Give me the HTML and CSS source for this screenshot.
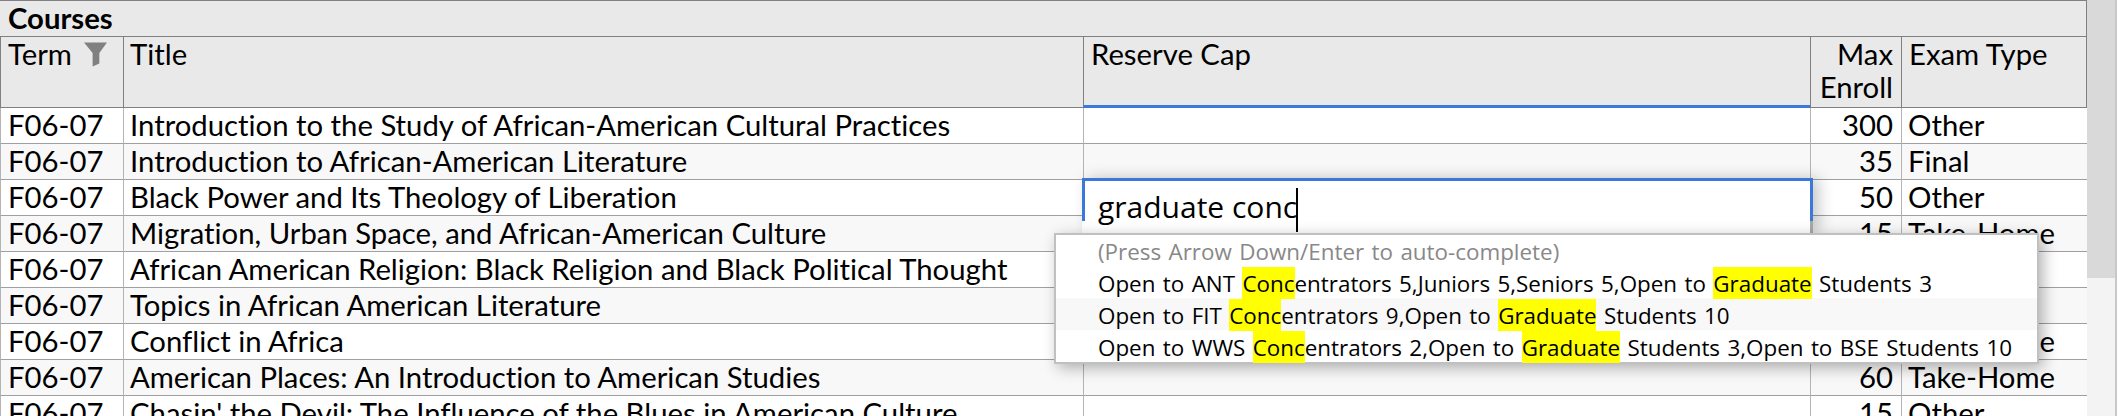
FILE: index.html
```html
<!DOCTYPE html>
<html lang="en">

<head>
    <meta charset="UTF-8">
    <title>Courses</title>
    <link rel="stylesheet" href="styles.css">
</head>

<body>
    <div class="page">
        <div class="sheet">
            <div class="sheet-title">Courses</div>
            <table class="grid">
                <colgroup>
                    <col class="col-term">
                    <col class="col-title">
                    <col class="col-reserve">
                    <col class="col-enroll">
                    <col class="col-exam">
                </colgroup>
                <thead>
                    <tr>
                        <th>Term
                            <svg class="filter-icon" viewBox="0 0 24 25"><path d="M0 0H24L16 11V22L9 25V11Z"/></svg>
                        </th>
                        <th>Title</th>
                        <th class="selected">Reserve Cap</th>
                        <th class="num">Max Enroll</th>
                        <th class="exam">Exam Type</th>
                    </tr>
                </thead>
                <tbody>
                    <tr><td>F06-07</td><td>Introduction to the Study of African-American Cultural Practices</td><td></td><td class="num">300</td><td>Other</td></tr>
                    <tr><td>F06-07</td><td>Introduction to African-American Literature</td><td></td><td class="num">35</td><td>Final</td></tr>
                    <tr><td>F06-07</td><td>Black Power and Its Theology of Liberation</td><td></td><td class="num">50</td><td>Other</td></tr>
                    <tr><td>F06-07</td><td>Migration, Urban Space, and African-American Culture</td><td></td><td class="num">15</td><td>Take-Home</td></tr>
                    <tr><td>F06-07</td><td>African American Religion: Black Religion and Black Political Thought</td><td></td><td class="num"></td><td></td></tr>
                    <tr><td>F06-07</td><td>Topics in African American Literature</td><td></td><td class="num"></td><td></td></tr>
                    <tr><td>F06-07</td><td>Conflict in Africa</td><td></td><td class="num"></td><td>Take-Home</td></tr>
                    <tr><td>F06-07</td><td>American Places: An Introduction to American Studies</td><td></td><td class="num">60</td><td>Take-Home</td></tr>
                    <tr><td>F06-07</td><td>Chasin' the Devil: The Influence of the Blues in American Culture</td><td></td><td class="num">15</td><td>Other</td></tr>
                </tbody>
            </table>
        </div>
        <div class="scroll-track"><div class="scroll-thumb"></div></div>

        <div class="cell-editor">graduate conc<span class="caret"></span></div>

        <div class="suggestions">
            <div class="hint">(Press Arrow Down/Enter to auto-complete)</div>
            <div class="option">Open to ANT <mark>Conc</mark>entrators 5,Juniors 5,Seniors 5,Open to <mark>Graduate</mark> Students 3</div>
            <div class="option active">Open to FIT <mark>Conc</mark>entrators 9,Open to <mark>Graduate</mark> Students 10</div>
            <div class="option">Open to WWS <mark>Conc</mark>entrators 2,Open to <mark>Graduate</mark> Students 3,Open to BSE Students 10</div>
        </div>
    </div>
</body>

</html>
```

FILE: styles.css
```css
html, body {
    margin: 0;
    padding: 0;
    background-color: #fff;
}

.page {
    position: relative;
    display: flex;
    width: 2118px;
    height: 416px;
    overflow: hidden;
    font-family: Lato, sans-serif;
    font-variant-ligatures: none;
    color: #000;
}

.sheet {
    width: 2087px;
    flex: none;
}

.sheet-title {
    box-sizing: border-box;
    height: 37px;
    padding: 0 8px;
    font-size: 29.3px;
    font-weight: bold;
    line-height: 33px;
    background-color: #e9e9e9;
    border-top: 1px solid #808080;
    border-right: 1px solid #808080;
    border-bottom: 1px solid #808080;
}

.grid {
    width: 2087px;
    table-layout: fixed;
    border-collapse: separate;
    border-spacing: 0;
    font-size: 29.3px;
}

.col-term { width: 123px; }
.col-title { width: 960px; }
.col-reserve { width: 727px; }
.col-enroll { width: 91px; }
.col-exam { width: 186px; }

.grid th {
    box-sizing: border-box;
    height: 71px;
    padding: 0 8px 0 7px;
    font-weight: normal;
    line-height: 33px;
    text-align: left;
    vertical-align: top;
    white-space: normal;
    background-color: #e9e9e9;
    border-left: 1px solid #808080;
    border-bottom: 1px solid #808080;
}

.grid th + th {
    padding-left: 6px;
}

.grid th.selected,
.grid th.exam {
    padding-left: 7px;
}

.grid th:last-child {
    border-right: 1px solid #808080;
}

.grid th.selected {
    border-bottom: 3px solid #3c78d8;
}

.grid th.num,
.grid td.num {
    text-align: right;
}

.filter-icon {
    width: 23px;
    height: 25px;
    margin-left: 5px;
    vertical-align: -2px;
    fill: #808080;
}

.grid td {
    box-sizing: border-box;
    height: 36px;
    padding: 0 8px 0 7px;
    line-height: 33px;
    vertical-align: top;
    white-space: nowrap;
    overflow: hidden;
    border-left: 1px solid #b4b4b4;
    border-bottom: 1px solid #a0a0a0;
}

.grid td + td {
    padding-left: 6px;
}

.grid tbody tr:nth-child(even) td {
    background-color: #f8f8f8;
}

.scroll-track {
    width: 28px;
    flex: none;
    border-right: 2px solid #c8c8c8;
    background-color: #f3f3f3;
}

.scroll-thumb {
    height: 278px;
    background-color: #d9d9d9;
}

.cell-editor {
    position: absolute;
    left: 1082px;
    top: 178px;
    box-sizing: border-box;
    width: 731px;
    height: 55px;
    padding: 9px 16px 0;
    font-family: "Open Sans", sans-serif;
    font-size: 30px;
    line-height: 40px;
    white-space: nowrap;
    background-color: #fff;
    border-right: 3px solid #a8a8a8;
    box-shadow: 6px 0 14px rgba(0, 0, 0, 0.22);
}

/* blue focus outline only covers the first row of the editor */
.cell-editor::before {
    content: "";
    position: absolute;
    left: 0;
    right: -3px;
    top: 0;
    height: 40px;
    border: 3px solid #3c78d8;
    border-bottom: none;
}

.caret {
    display: inline-block;
    width: 2px;
    height: 44px;
    margin-left: -1px;
    vertical-align: -14px;
    background-color: #000;
}

.suggestions {
    position: absolute;
    left: 1054px;
    top: 233px;
    box-sizing: border-box;
    width: 985px;
    height: 131px;
    font-family: "Open Sans", sans-serif;
    font-size: 22.4px;
    word-spacing: 1.6px;
    background-color: #fff;
    border: 2px solid #c0c0c0;
    box-shadow: 4px 4px 14px rgba(0, 0, 0, 0.3);
}

.hint,
.option {
    height: 31px;
    padding: 1px 42px 0;
    line-height: 31px;
    white-space: nowrap;
}

.hint {
    height: 30px;
    line-height: 32px;
    color: #888;
}

.option.active {
    background-color: #f8f8f8;
}

.option mark {
    display: inline-block;
    padding-top: 1px;
    background-color: #ff0;
}
```
